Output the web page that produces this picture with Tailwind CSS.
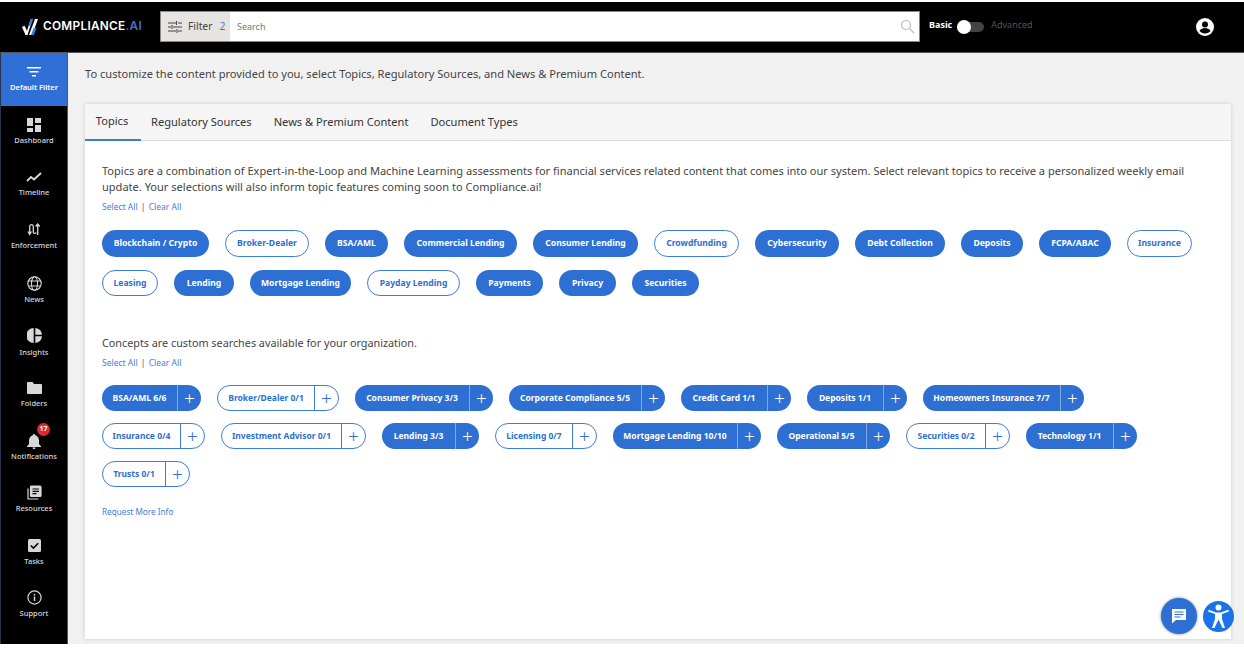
<!DOCTYPE html>
<html lang="en">
<head>
<meta charset="UTF-8">
<title>Compliance.ai</title>
<script src="https://cdn.jsdelivr.net/npm/@tailwindcss/browser@4"></script>
</head>
<body class="bg-white font-['Noto_Sans',sans-serif] overflow-hidden">
<div class="w-[1244px] h-[648px] overflow-hidden relative bg-white">
  <!-- Top bar -->
  <header class="mt-[2px] h-[51px] bg-black border-b border-[#555] flex items-center">
    <div class="w-[160px] pl-[22px] flex items-center">
      <svg width="17" height="16" viewBox="0 0 17 16">
        <path d="M0 8l2.600-1.300L4.600 11 5.800 14.500 4.500 16H3.500z" fill="#fff"/>
        <path d="M3.500 16L9 0h1.500L5.500 16z" fill="#fff"/>
        <path d="M6.200 6.500L8.500 0h2.800L8.500 7.500z" fill="#3b7ddd"/>
        <path d="M6.500 16L12.500 0h3L9.800 16z" fill="#fff" transform="translate(.5 0)"/>
        <path d="M9 16l2.500-6.800h3L11.800 16z" fill="#3b7ddd"/>
      </svg>
      <span class="ml-[4px] text-[11.800px] font-semibold text-white tracking-[0.3px] font-['Inter',sans-serif] whitespace-nowrap">COMPLIANCE<span class="text-[#3f74c9]">.AI</span></span>
    </div>
    <div class="w-[760px] h-[31px] mb-[1px] flex border border-[#888] bg-white">
      <div class="w-[69px] h-full bg-[#e6e3e1] flex items-center pl-[7px] gap-[6px]">
        <svg width="14" height="12" viewBox="0 0 14 12" fill="none" stroke="#444" stroke-width="1"><path d="M0 2h8M10 2h4M8.500 0v4M0 6h3M5 6h9M4 4v4M0 10h8M10 10h4M9 8v4"/></svg>
        <span class="text-[10.300px] text-[#444]">Filter</span>
        <span class="text-[10.300px] text-[#3f7de0] ml-[1px]">2</span>
      </div>
      <div class="flex-1 flex items-center pl-[7px] pr-[4px] justify-between">
        <span class="text-[9px] text-[#777]">Search</span>
        <svg width="15" height="15" viewBox="0 0 15 15" fill="none" stroke="#bbb" stroke-width="1.200"><circle cx="6" cy="6" r="4.500"/><path d="M9.500 9.500l4.500 4.500"/></svg>
      </div>
    </div>
    <span class="ml-[9px] pb-[4px] text-[9px] font-bold text-white">Basic</span>
    <div class="relative ml-[5px] w-[27px] h-[10px] rounded-full bg-[#444] mr-[7px] mb-[1px]">
      <div class="absolute left-0 top-[-2px] w-[14px] h-[14px] rounded-full bg-white"></div>
    </div>
    <span class="pb-[4px] text-[9px] text-[#555]">Advanced</span>
    <svg class="ml-[162px]" width="20" height="20" viewBox="0 0 20 20">
      <circle cx="10" cy="10" r="9" fill="#fff"/>
      <circle cx="10" cy="7.500" r="3" fill="#000"/>
      <path d="M4.500 14c1-2.200 3.500-3 5.500-3s4.500.8 5.500 3c-1.200 1.500-3.200 2.500-5.500 2.500S5.700 15.500 4.500 14z" fill="#000"/>
    </svg>
  </header>

  <div class="flex h-[591px]">
    <!-- Sidebar -->
    <nav class="w-[68px] h-[591px] bg-black border-l border-[#26364f] border-r border-r-[#555] flex flex-col text-[#d8d8d8] shrink-0">
      <a class="h-[53px] bg-[#2f6fd6] flex flex-col items-center justify-center gap-[5px] text-white">
        <svg width="14" height="10" viewBox="0 0 14 10" fill="#fff"><path d="M0 0h14v1.600H0zM2.500 4h9v1.600h-9zM5 8h4v1.600H5z"/></svg>
        <span class="text-[7.500px] font-semibold leading-[10px]">Default Filter</span>
      </a>
      <a class="h-[53px] pb-[2px] flex flex-col items-center justify-center gap-[3px]">
        <svg width="14" height="14" viewBox="0 0 14 14" fill="#d8d8d8"><path d="M0 0h6v8H0zM8 0h6v5H8zM0 10h6v4H0zM8 7h6v7H8z"/></svg>
        <span class="text-[7.500px] font-medium leading-[10px]">Dashboard</span>
      </a>
      <a class="h-[52px] pb-[3px] flex flex-col items-center justify-center gap-[4px]">
        <svg width="16" height="12" viewBox="0 0 16 12" fill="none" stroke="#d8d8d8" stroke-width="1.800"><path d="M1 10l4-4 3 2.500L15 2"/></svg>
        <span class="text-[7.500px] font-medium leading-[10px]">Timeline</span>
      </a>
      <a class="h-[53px] pb-[3px] flex flex-col items-center justify-center gap-[4px]">
        <svg width="14" height="13" viewBox="0 0 14 13" fill="none" stroke="#d8d8d8" stroke-width="1.300"><path d="M1 8.500l1.700 3 1.700-3M2.700 11V3.500a1.800 1.800 0 0 1 3.600 0v6a1.700 1.700 0 0 0 3 0M8.700 3.500l2-2.500 2 2.500M10.700 1.500V12"/></svg>
        <span class="text-[7.500px] font-medium leading-[10px]">Enforcement</span>
      </a>
      <a class="h-[53px] pb-[2px] flex flex-col items-center justify-center gap-[3px]">
        <svg width="15" height="15" viewBox="0 0 15 15" fill="none" stroke="#d8d8d8" stroke-width="1.100"><circle cx="7.500" cy="7.500" r="6.700"/><ellipse cx="7.500" cy="7.500" rx="3" ry="6.700"/><path d="M1.300 5h12.400M1.300 10h12.400"/></svg>
        <span class="text-[7.500px] font-medium leading-[10px]">News</span>
      </a>
      <a class="h-[53px] pb-[3px] flex flex-col items-center justify-center gap-[4px]">
        <svg width="15" height="15" viewBox="0 0 15 15" fill="#d8d8d8"><path d="M6.700 0v15A7.500 7.500 0 0 1 6.700 0zM8.300 0A7.500 7.500 0 0 1 15 6.700H8.300zM8.300 8.300H15A7.500 7.500 0 0 1 8.300 15z"/></svg>
        <span class="text-[7.500px] font-medium leading-[10px]">Insights</span>
      </a>
      <a class="h-[52px] pb-[3px] flex flex-col items-center justify-center gap-[4px]">
        <svg width="15" height="12" viewBox="0 0 15 12" fill="#d8d8d8"><path d="M0 1a1 1 0 0 1 1-1h4.500l1.500 2h7a1 1 0 0 1 1 1v8a1 1 0 0 1-1 1H1a1 1 0 0 1-1-1z"/></svg>
        <span class="text-[7.500px] font-medium leading-[10px]">Folders</span>
      </a>
      <a class="h-[53px] pb-[3px] flex flex-col items-center justify-center gap-[2px] relative">
        <svg width="14" height="15" viewBox="0 0 14 15" fill="#d8d8d8"><path d="M7 0a1.200 1.200 0 0 1 1.200 1.300C10.600 2 12 4 12 6.500V10l2 2.200v.8H0v-.8L2 10V6.500C2 4 3.400 2 5.800 1.300A1.200 1.200 0 0 1 7 0zM5.500 13.600h3a1.500 1.500 0 0 1-3 0z"/></svg>
        <span class="text-[7.500px] font-medium leading-[10px]">Notifications</span>
        <span class="absolute left-[36px] top-[1px] w-[13px] h-[13px] rounded-full bg-[#d92b2b] text-white text-[7px] font-bold flex items-center justify-center">17</span>
      </a>
      <a class="h-[53px] pb-[5px] flex flex-col items-center justify-center gap-[3px]">
        <svg width="15" height="15" viewBox="0 0 15 15" fill="none" stroke="#d8d8d8" stroke-width="1.200"><path d="M1 3.500V14h10.500"/><rect x="3.500" y="1" width="10.500" height="10.500" rx="1" fill="#d8d8d8"/><path d="M5.500 4h6.500M5.500 6.300h6.500M5.500 8.600h4" stroke="#000"/></svg>
        <span class="text-[7.500px] font-medium leading-[10px]">Resources</span>
      </a>
      <a class="h-[52px] pb-[4px] flex flex-col items-center justify-center gap-[4px]">
        <svg width="13" height="13" viewBox="0 0 13 13"><rect width="13" height="13" rx="1.500" fill="#d8d8d8"/><path d="M2.800 6.500l2.600 2.600 4.800-4.800" fill="none" stroke="#000" stroke-width="1.500"/></svg>
        <span class="text-[7.500px] font-medium leading-[10px]">Tasks</span>
      </a>
      <a class="h-[53px] pb-[5px] flex flex-col items-center justify-center gap-[3px]">
        <svg width="15" height="15" viewBox="0 0 15 15" fill="none" stroke="#d8d8d8" stroke-width="1.200"><circle cx="7.500" cy="7.500" r="6.600"/><path d="M7.500 6.500V11M7.500 4v1.400" stroke-width="1.500"/></svg>
        <span class="text-[7.500px] font-medium leading-[10px]">Support</span>
      </a>
    </nav>

    <!-- Main content -->
    <main class="flex-1 h-[591px] bg-[#f1f1f1] pl-[17px] pr-[13px]">
      <p class="h-[51px] pt-[12px] text-[11.100px] leading-[17px] text-[#444]">To customize the content provided to you, select Topics, Regulatory Sources, and News &amp; Premium Content.</p>
      <section class="h-[535px] bg-white shadow-[0_0_4px_rgba(0,0,0,0.15)]">
        <div class="h-[37px] bg-[#f5f5f5] border-b border-[#ddd] flex text-[11.100px] text-[#333]">
          <a class="w-[56px] h-[37px] pr-[2px] border-b-2 border-[#3b7ddd] flex items-center justify-center">Topics</a>
          <a class="ml-[10px] flex items-center">Regulatory Sources</a>
          <a class="ml-[22px] flex items-center">News &amp; Premium Content</a>
          <a class="ml-[22px] flex items-center">Document Types</a>
        </div>
        <div class="pl-[17px] pr-[30px] pt-[22px]">
          <p class="text-[11.050px] leading-[16px] text-[#444]">Topics are a combination of Expert-in-the-Loop and Machine Learning assessments for financial services related content that comes into our system. Select relevant topics to receive a personalized weekly email update. Your selections will also inform topic features coming soon to Compliance.ai!</p>
          <p class="mt-[5px] h-[14px] text-[8.500px] leading-[14px] text-[#3f7de0]">Select All <span class="mx-[1px] text-[#555]">|</span> Clear All</p>

          <div class="mt-[16px] flex flex-wrap gap-x-[16px] gap-y-[13px] text-[8.600px] font-bold">
            <span class="w-[107px] h-[27px] rounded-full bg-[#2d6fd2] text-white flex items-center justify-center">Blockchain / Crypto</span>
            <span class="w-[84px] h-[27px] rounded-full border border-[#3b7ddd] bg-white text-[#2d6fd2] flex items-center justify-center">Broker-Dealer</span>
            <span class="w-[63px] h-[27px] rounded-full bg-[#2d6fd2] text-white flex items-center justify-center">BSA/AML</span>
            <span class="w-[113px] h-[27px] rounded-full bg-[#2d6fd2] text-white flex items-center justify-center">Commercial Lending</span>
            <span class="w-[105px] h-[27px] rounded-full bg-[#2d6fd2] text-white flex items-center justify-center">Consumer Lending</span>
            <span class="w-[85px] h-[27px] rounded-full border border-[#3b7ddd] bg-white text-[#2d6fd2] flex items-center justify-center">Crowdfunding</span>
            <span class="w-[84px] h-[27px] rounded-full bg-[#2d6fd2] text-white flex items-center justify-center">Cybersecurity</span>
            <span class="w-[90px] h-[27px] rounded-full bg-[#2d6fd2] text-white flex items-center justify-center">Debt Collection</span>
            <span class="w-[62px] h-[27px] rounded-full bg-[#2d6fd2] text-white flex items-center justify-center">Deposits</span>
            <span class="w-[72px] h-[27px] rounded-full bg-[#2d6fd2] text-white flex items-center justify-center">FCPA/ABAC</span>
            <span class="w-[65px] h-[27px] rounded-full border border-[#3b7ddd] bg-white text-[#2d6fd2] flex items-center justify-center">Insurance</span>
            <span class="w-[56px] h-[26px] rounded-full border border-[#3b7ddd] bg-white text-[#2d6fd2] flex items-center justify-center">Leasing</span>
            <span class="w-[60px] h-[26px] rounded-full bg-[#2d6fd2] text-white flex items-center justify-center">Lending</span>
            <span class="w-[101px] h-[26px] rounded-full bg-[#2d6fd2] text-white flex items-center justify-center">Mortgage Lending</span>
            <span class="w-[93px] h-[26px] rounded-full border border-[#3b7ddd] bg-white text-[#2d6fd2] flex items-center justify-center">Payday Lending</span>
            <span class="w-[67px] h-[26px] rounded-full bg-[#2d6fd2] text-white flex items-center justify-center">Payments</span>
            <span class="w-[57px] h-[26px] rounded-full bg-[#2d6fd2] text-white flex items-center justify-center">Privacy</span>
            <span class="w-[67px] h-[26px] rounded-full bg-[#2d6fd2] text-white flex items-center justify-center">Securities</span>
          </div>

          <p class="mt-[39px] text-[10.800px] leading-[16px] text-[#444]">Concepts are custom searches available for your organization.</p>
          <p class="mt-[5px] h-[14px] text-[8.500px] leading-[14px] text-[#3f7de0]">Select All <span class="mx-[1px] text-[#555]">|</span> Clear All</p>

          <div class="mt-[15px] flex flex-col gap-y-[12px] text-[8.500px] font-bold">
            <div class="flex gap-x-[16px]">
              <span class="w-[99px] h-[26px] rounded-full bg-[#2d6fd2] text-white flex items-center"><span class="flex-1 text-center">BSA/AML 6/6</span><span class="w-[24px] h-full border-l border-white/40 text-[19px] leading-none font-light flex items-center justify-center">+</span></span>
              <span class="w-[122px] h-[26px] rounded-full border border-[#3b7ddd] bg-white text-[#2d6fd2] flex items-center"><span class="flex-1 text-center">Broker/Dealer 0/1</span><span class="w-[24px] h-full border-l border-[#3b7ddd] text-[19px] leading-none font-light flex items-center justify-center">+</span></span>
              <span class="w-[138px] h-[26px] rounded-full bg-[#2d6fd2] text-white flex items-center"><span class="flex-1 text-center">Consumer Privacy 3/3</span><span class="w-[24px] h-full border-l border-white/40 text-[19px] leading-none font-light flex items-center justify-center">+</span></span>
              <span class="w-[156px] h-[26px] rounded-full bg-[#2d6fd2] text-white flex items-center"><span class="flex-1 text-center">Corporate Compliance 5/5</span><span class="w-[24px] h-full border-l border-white/40 text-[19px] leading-none font-light flex items-center justify-center">+</span></span>
              <span class="w-[110px] h-[26px] rounded-full bg-[#2d6fd2] text-white flex items-center"><span class="flex-1 text-center">Credit Card 1/1</span><span class="w-[24px] h-full border-l border-white/40 text-[19px] leading-none font-light flex items-center justify-center">+</span></span>
              <span class="w-[100px] h-[26px] rounded-full bg-[#2d6fd2] text-white flex items-center"><span class="flex-1 text-center">Deposits 1/1</span><span class="w-[24px] h-full border-l border-white/40 text-[19px] leading-none font-light flex items-center justify-center">+</span></span>
              <span class="w-[161px] h-[26px] rounded-full bg-[#2d6fd2] text-white flex items-center"><span class="flex-1 text-center">Homeowners Insurance 7/7</span><span class="w-[24px] h-full border-l border-white/40 text-[19px] leading-none font-light flex items-center justify-center">+</span></span>
            </div>
            <div class="flex gap-x-[16px]">
              <span class="w-[103px] h-[26px] rounded-full border border-[#3b7ddd] bg-white text-[#2d6fd2] flex items-center"><span class="flex-1 text-center">Insurance 0/4</span><span class="w-[24px] h-full border-l border-[#3b7ddd] text-[19px] leading-none font-light flex items-center justify-center">+</span></span>
              <span class="w-[145px] h-[26px] rounded-full border border-[#3b7ddd] bg-white text-[#2d6fd2] flex items-center"><span class="flex-1 text-center">Investment Advisor 0/1</span><span class="w-[24px] h-full border-l border-[#3b7ddd] text-[19px] leading-none font-light flex items-center justify-center">+</span></span>
              <span class="w-[97px] h-[26px] rounded-full bg-[#2d6fd2] text-white flex items-center"><span class="flex-1 text-center">Lending 3/3</span><span class="w-[24px] h-full border-l border-white/40 text-[19px] leading-none font-light flex items-center justify-center">+</span></span>
              <span class="w-[102px] h-[26px] rounded-full border border-[#3b7ddd] bg-white text-[#2d6fd2] flex items-center"><span class="flex-1 text-center">Licensing 0/7</span><span class="w-[24px] h-full border-l border-[#3b7ddd] text-[19px] leading-none font-light flex items-center justify-center">+</span></span>
              <span class="w-[148px] h-[26px] rounded-full bg-[#2d6fd2] text-white flex items-center"><span class="flex-1 text-center">Mortgage Lending 10/10</span><span class="w-[24px] h-full border-l border-white/40 text-[19px] leading-none font-light flex items-center justify-center">+</span></span>
              <span class="w-[113px] h-[26px] rounded-full bg-[#2d6fd2] text-white flex items-center"><span class="flex-1 text-center">Operational 5/5</span><span class="w-[24px] h-full border-l border-white/40 text-[19px] leading-none font-light flex items-center justify-center">+</span></span>
              <span class="w-[104px] h-[26px] rounded-full border border-[#3b7ddd] bg-white text-[#2d6fd2] flex items-center"><span class="flex-1 text-center">Securities 0/2</span><span class="w-[24px] h-full border-l border-[#3b7ddd] text-[19px] leading-none font-light flex items-center justify-center">+</span></span>
              <span class="w-[111px] h-[26px] rounded-full bg-[#2d6fd2] text-white flex items-center"><span class="flex-1 text-center">Technology 1/1</span><span class="w-[24px] h-full border-l border-white/40 text-[19px] leading-none font-light flex items-center justify-center">+</span></span>
            </div>
            <div class="flex gap-x-[16px]">
              <span class="w-[88px] h-[26px] rounded-full border border-[#3b7ddd] bg-white text-[#2d6fd2] flex items-center"><span class="flex-1 text-center">Trusts 0/1</span><span class="w-[24px] h-full border-l border-[#3b7ddd] text-[19px] leading-none font-light flex items-center justify-center">+</span></span>
            </div>
          </div>
          <p class="mt-[18px] text-[8.200px] leading-[14px] text-[#3f7de0]">Request More Info</p>
        </div>
      </section>
    </main>
  </div>

  <!-- Floating buttons -->
  <button class="absolute left-[1161px] top-[598px] w-[36px] h-[36px] rounded-full bg-[#2d6fd2] shadow-[0_0_3px_rgba(0,0,0,0.5)] flex items-center justify-center">
    <svg width="16" height="16" viewBox="0 0 16 16"><path d="M1 1h14v11H5l-4 3.500z" fill="#fff"/><path d="M3.500 4h9M3.500 6.500h9M3.500 9h6" stroke="#2d6fd2" stroke-width="1"/></svg>
  </button>
  <button class="absolute left-[1203px] top-[601px] w-[31px] h-[31px] rounded-full bg-[#1a73e8] flex items-center justify-center">
    <svg width="23" height="25" viewBox="0 0 23 25" fill="#fff"><circle cx="11.500" cy="3.500" r="3"/><path d="M1 7.500l7 2.500v5l-3 9h2.500L11.500 15.500 15.500 24H18l-3-9v-5l7-2.500-.8-1.800L14 8.500H9L1.800 5.700z"/></svg>
  </button>
</div>
</body>
</html>
